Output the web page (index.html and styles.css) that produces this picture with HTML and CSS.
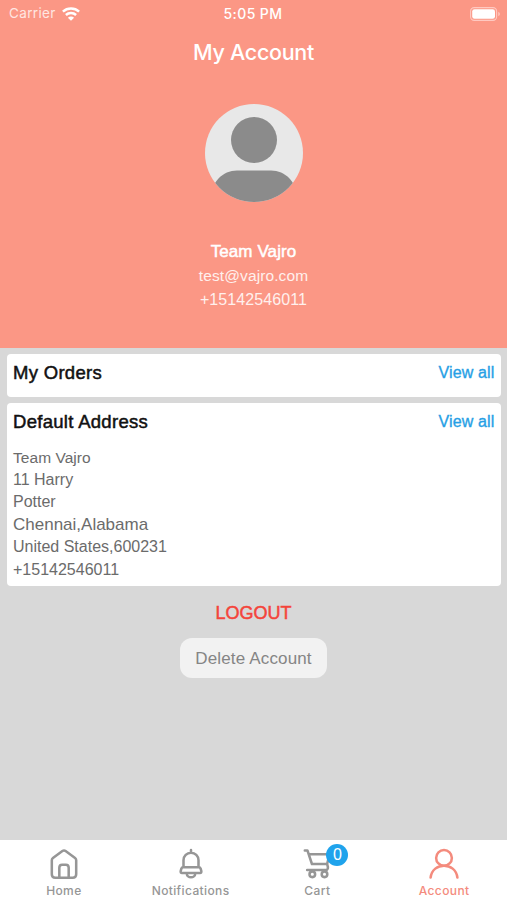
FILE: index.html
```html
<!DOCTYPE html>
<html lang="en">
<head>
<meta charset="utf-8">
<title>My Account</title>
<link rel="stylesheet" href="styles.css">
</head>
<body>
<div class="app">
  <header class="hero">
    <div class="status">
      <div class="carrier"><span>Carrier</span>
        <svg width="18" height="14" viewBox="0 0 18 14" fill="none" stroke="#fff" stroke-width="2.5"><path d="M.9 4.600C5.400.5 12.600.5 17.100 4.600M3.900 8c2.900-2.700 7.300-2.700 10.200 0"/><path d="M9 13.800 5.900 10.700c1.700-1.600 4.500-1.600 6.200 0z" fill="#fff" stroke="none"/></svg>
      </div>
      <span class="time">5:05 PM</span>
      <div class="power"><svg width="31" height="14" viewBox="0 0 31 14"><rect x=".6" y=".6" width="26" height="12.800" rx="3.600" fill="none" stroke="#ffc9c1" stroke-width="1.100"/><rect x="2.200" y="2.200" width="22.800" height="9.600" rx="2.300" fill="#fff"/><path d="M28.300 4.800v4.400q1.600-.7 1.600-2.200t-1.600-2.200" fill="#ffc9c1"/></svg></div>
    </div>
    <h1 class="title">My Account</h1>
    <svg class="avatar" width="98" height="98" viewBox="0 0 98 98"><defs><clipPath id="disc"><circle cx="49" cy="49" r="49"/></clipPath></defs><g clip-path="url(#disc)"><rect width="98" height="98" fill="#e8e8e8"/><circle cx="49" cy="36" r="23" fill="#8b8b8b"/><path d="M5 98c0-20 13-31.500 27-31.500h34c14 0 27 11.500 27 31.500z" fill="#8b8b8b"/></g></svg>
    <div class="name">Team Vajro</div>
    <div class="contact email">test@vajro.com</div>
    <div class="contact phone">+15142546011</div>
  </header>
  <main class="content">
    <section class="card orders"><div class="card-head"><h2>My Orders</h2><a class="link">View all</a></div></section>
    <section class="card address"><div class="card-head"><h2>Default Address</h2><a class="link">View all</a></div>
      <div class="lines"><p class="person">Team Vajro</p><p>11 Harry</p><p>Potter</p><p class="city">Chennai,Alabama</p><p>United States,600231</p><p>+15142546011</p></div>
    </section>
    <div class="logout">LOGOUT</div>
    <button class="delete">Delete Account</button>
  </main>
  <nav class="tabs">
    <div class="tab"><svg width="30" height="32" viewBox="0 0 32 34"><path d="M3 13q0-1.500 1.200-2.400L14.300 3.200q1.700-1.200 3.400 0l10.100 7.400Q29 11.500 29 13v15q0 3.700-3.700 3.700H6.700Q3 31.700 3 28zM11 31.500V21q0-3.200 3-3.200h4q3 0 3 3.200v10.500"/></svg><span>Home</span></div>
    <div class="tab"><svg width="30" height="32" viewBox="0 0 32 34"><path d="M16 2v3M8 20.500V13a8 8 0 0 1 16 0v7.500M7.500 20.500h17q1.200 0 1.700 1.200l.8 2.800q.4 2-1.400 2H6.400q-1.800 0-1.400-2l.8-2.800Q6.300 20.500 7.500 20.500zM11.500 27c0 5.500 9 5.500 9 0"/></svg><span>Notifications</span></div>
    <div class="tab"><div class="cart"><svg width="30" height="32" viewBox="0 0 32 34"><path d="M3 2.500h2.800l4.800 14.500h16.200l2.600-10.500H7.200M26.800 17q2.200 6.500-1.500 6.500H5.500"/><circle cx="11" cy="28" r="3"/><circle cx="24" cy="28" r="3"/></svg><b class="badge">0</b></div><span>Cart</span></div>
    <div class="tab active"><svg width="30" height="32" viewBox="0 0 32 34"><circle cx="16" cy="10.500" r="8.400"/><path d="M1.700 31.500c2-17 26.600-17 28.600 0"/></svg><span>Account</span></div>
  </nav>
</div>
</body>
</html>
```
FILE: styles.css
```css
* { box-sizing: border-box; }
body { margin: 0; font-family: "Liberation Sans", Arial, sans-serif; }
h1, h2, p { margin: 0; font-weight: 400; }
.app { width: 507px; height: 900px; display: flex; flex-direction: column; background: #d8d8d8; overflow: hidden; }
.hero { height: 348px; flex: none; background: #fb9785; color: #fff; display: flex; flex-direction: column; align-items: center; }
.status { width: 100%; height: 27px; padding: 0 6px 0 9px; display: grid; grid-template-columns: 1fr auto 1fr; align-items: center; font: 13.500px/27px Inter, sans-serif; }
.carrier { display: flex; align-items: center; gap: 6px; color: #ffe6e1; letter-spacing: .35px; }
.time { font-size: 14px; font-weight: 500; letter-spacing: .4px; margin: 0 2px 0 -2px; }
.power { display: flex; justify-content: flex-end; }
.title { margin-top: 11px; height: 28px; font: 500 21.500px/28px Inter, sans-serif; letter-spacing: -.3px; }
.avatar { margin-top: 37.500px; flex: none; }
.name { margin-top: 37px; font-size: 17px; line-height: 25px; letter-spacing: .1px; -webkit-text-stroke: .5px; }
.contact { font-size: 15.500px; line-height: 24px; color: #fff0ed; letter-spacing: .1px; }
.phone { font-size: 16px; }
.content { flex: 1; display: flex; flex-direction: column; align-items: center; padding-top: 6px; }
.card { width: 494px; background: #fff; border-radius: 4px; padding: 0 6px; }
.orders { height: 43px; }
.address { height: 183px; margin-top: 6px; }
.card-head { height: 38px; display: flex; justify-content: space-between; align-items: center; }
h2 { font-size: 18.500px; color: #111; letter-spacing: .3px; padding-left: .5px; -webkit-text-stroke: .5px; }
.link { font-size: 16px; color: #279fe5; letter-spacing: .15px; -webkit-text-stroke: .35px; }
.lines { padding: 5.600px 0 0 .5px; font-size: 16px; line-height: 22.400px; color: #6b6b6b; }
.lines .person { font-size: 15.500px; letter-spacing: .05px; }
.lines .city { font-size: 17px; }
.logout { margin-top: 16px; font-size: 18px; line-height: 22px; color: #f4443b; -webkit-text-stroke: .5px; }
.delete { width: 147px; height: 40px; margin-top: 14px; padding: 1px 0 0; border: 0; border-radius: 12px; background: #f2f2f2; color: #858585; font: 17px "Liberation Sans", Arial, sans-serif; letter-spacing: .15px; }
.tabs { height: 60px; flex: none; background: #fff; display: grid; grid-template-columns: repeat(4, 1fr); color: #969696; }
.tab { display: flex; flex-direction: column; align-items: center; padding: 8px 0 0 1px; font: 500 12px/16px Inter, sans-serif; letter-spacing: .38px; }
.tab svg { display: block; fill: none; stroke: currentColor; stroke-width: 2.700; stroke-linecap: round; stroke-linejoin: round; }
.tab span { margin-top: 3px; }
.active { color: #f48b7d; }
.cart { position: relative; }
.badge { position: absolute; left: 24px; top: -4px; width: 22px; height: 22px; border-radius: 50%; background: #1fa3ec; color: #fff; font: 16px/22px "Liberation Sans", sans-serif; letter-spacing: 0; text-align: center; }
```
